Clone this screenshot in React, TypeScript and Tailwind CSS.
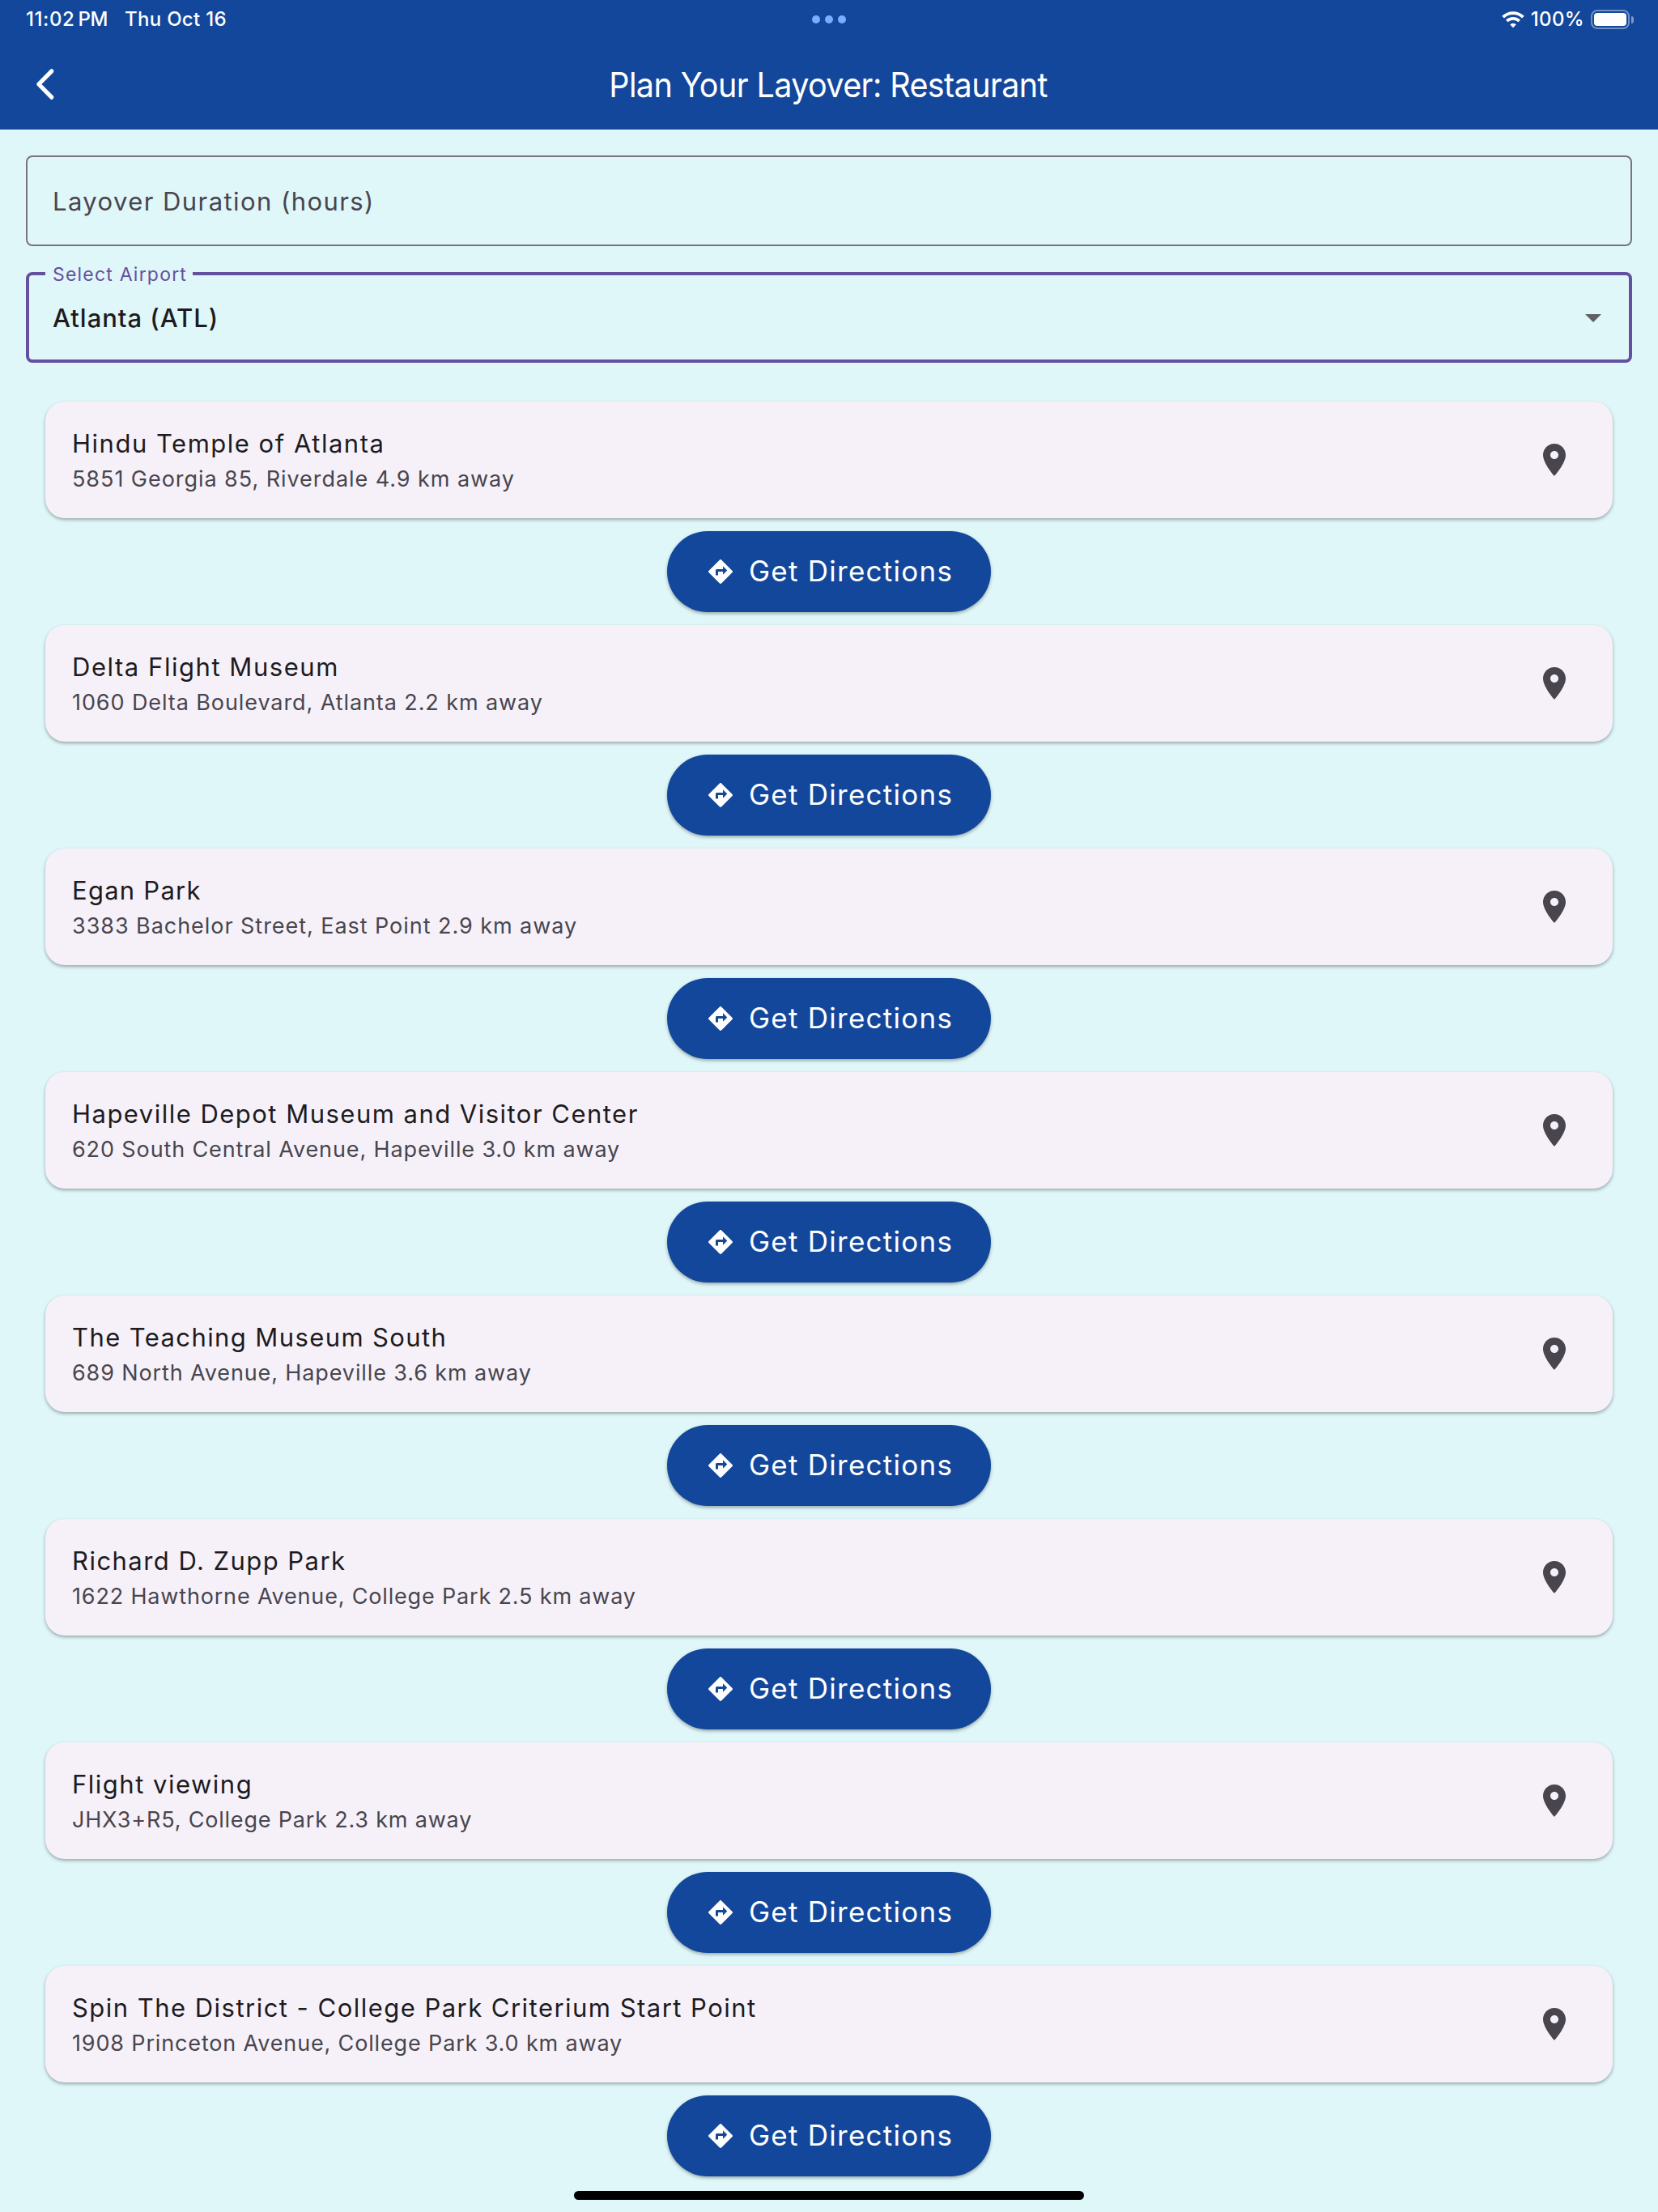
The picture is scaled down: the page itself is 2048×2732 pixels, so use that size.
import React from "react";

type Place = {
  name: string;
  address: string;
  nameTracking: string;
  addressTracking: string;
};

const places: Place[] = [
  { name: "Hindu Temple of Atlanta", address: "5851 Georgia 85, Riverdale 4.9 km away", nameTracking: "tracking-[1.51px]", addressTracking: "tracking-[0.95px]" },
  { name: "Delta Flight Museum", address: "1060 Delta Boulevard, Atlanta 2.2 km away", nameTracking: "tracking-[1.54px]", addressTracking: "tracking-[0.91px]" },
  { name: "Egan Park", address: "3383 Bachelor Street, East Point 2.9 km away", nameTracking: "tracking-[1.25px]", addressTracking: "tracking-[0.95px]" },
  { name: "Hapeville Depot Museum and Visitor Center", address: "620 South Central Avenue, Hapeville 3.0 km away", nameTracking: "tracking-[1.48px]", addressTracking: "tracking-[0.88px]" },
  { name: "The Teaching Museum South", address: "689 North Avenue, Hapeville 3.6 km away", nameTracking: "tracking-[1.4px]", addressTracking: "tracking-[0.88px]" },
  { name: "Richard D. Zupp Park", address: "1622 Hawthorne Avenue, College Park 2.5 km away", nameTracking: "tracking-[1.46px]", addressTracking: "tracking-[0.83px]" },
  { name: "Flight viewing", address: "JHX3+R5, College Park 2.3 km away", nameTracking: "tracking-[1.5px]", addressTracking: "tracking-[0.81px]" },
  { name: "Spin The District - College Park Criterium Start Point", address: "1908 Princeton Avenue, College Park 3.0 km away", nameTracking: "tracking-[1.47px]", addressTracking: "tracking-[0.85px]" },
];

function WifiIcon() {
  return (
    <svg className="h-[21px] w-[28px]" viewBox="0 0 28 21" fill="none" stroke="white">
      <path d="M1.6 7.2a17.8 17.8 0 0 1 24.8 0" strokeWidth="3.9" />
      <path d="M6.3 12a11.1 11.1 0 0 1 15.4 0" strokeWidth="3.7" />
      <path d="M14 20.2l-3.9-3.9a5.6 5.6 0 0 1 7.8 0z" fill="white" stroke="none" />
    </svg>
  );
}

function PinIcon() {
  return (
    <svg className="size-12 shrink-0 fill-[#48454e]" viewBox="0 0 24 24">
      <path d="M12 2C8.13 2 5 5.13 5 9c0 5.25 7 13 7 13s7-7.75 7-13c0-3.87-3.13-7-7-7zm0 9.5c-1.38 0-2.5-1.12-2.5-2.5s1.12-2.5 2.5-2.5 2.5 1.12 2.5 2.5-1.12 2.5-2.5 2.5z" />
    </svg>
  );
}

function DirectionsIcon() {
  return (
    <svg className="size-9 shrink-0 fill-white" viewBox="0 0 24 24">
      <path d="M21.71 11.29l-9-9c-.39-.39-1.02-.39-1.41 0l-9 9c-.39.39-.39 1.02 0 1.41l9 9c.39.39 1.02.39 1.41 0l9-9c.39-.38.39-1.01 0-1.41zM14 14.5V12h-4v3H8v-4c0-.55.45-1 1-1h5V7.5l3.5 3.5-3.5 3.5z" />
    </svg>
  );
}

function StatusBar() {
  return (
    <div className="grid h-12 grid-cols-3 items-center px-[30px] text-2xl font-medium">
      <div className="flex items-center pl-0.5">
        <span className="tracking-[0.6px]">11:02</span>
        <span className="ml-[4px] tracking-[-0.4px]">PM</span>
        <span className="ml-[21px] tracking-[0.3px]">Thu Oct 16</span>
      </div>
      <div className="flex justify-center gap-1.5">
        <span className="size-2.5 rounded-full bg-[#7aadff]" />
        <span className="size-2.5 rounded-full bg-[#7aadff]" />
        <span className="size-2.5 rounded-full bg-[#7aadff]" />
      </div>
      <div className="flex items-center justify-end">
        <WifiIcon />
        <span className="ml-2 tracking-[0.35px]">100%</span>
        <span className="ml-2 h-6 w-12 rounded-[8px] border-2 border-white/40 p-[2px]">
          <span className="block size-full rounded-[4px] bg-white" />
        </span>
        <span className="ml-[2px] h-[9px] w-[3px] rounded-r-full bg-white/45" />
      </div>
    </div>
  );
}

function PlaceItem({ place }: { place: Place }) {
  return (
    <li className="flex flex-col items-center gap-4">
      <div className="flex h-36 w-full items-center justify-between rounded-3xl bg-[#f6f1f9] pr-12 pl-8 shadow-[0_2px_4px_rgba(0,0,0,0.28),0_2px_3px_rgba(0,0,0,0.06)]">
        <div className="h-full pt-[29px] pl-px font-[370] whitespace-nowrap">
          <p className={`text-[31px] leading-[46px] text-[#1d1b20] ${place.nameTracking}`}>{place.name}</p>
          <p className={`text-[27px] leading-[42px] text-[#48454e] ${place.addressTracking}`}>{place.address}</p>
        </div>
        <PinIcon />
      </div>
      <button className="flex h-[100px] w-[400px] items-center gap-[17px] rounded-full bg-[#13479b] pl-12 text-[35px] tracking-[1.25px] whitespace-nowrap text-white shadow-[0_2px_4px_rgba(0,0,0,0.28),0_2px_3px_rgba(0,0,0,0.06)]">
        <DirectionsIcon />
        <span className="pb-0.5">Get Directions</span>
      </button>
    </li>
  );
}

export default function App() {
  return (
    <div className="relative h-[2732px] w-[2048px] overflow-hidden bg-[#dff7f9] font-['Inter',sans-serif]">
      <header className="h-40 bg-[#13479b] text-white">
        <StatusBar />
        <div className="grid h-28 grid-cols-[120px_1fr_120px] items-center">
          <svg className="ml-8 size-12" viewBox="0 0 48 48" fill="none" stroke="white" strokeWidth="5.2" strokeLinecap="round" strokeLinejoin="round">
            <path d="M31.8 7.8L15.8 24l16 16.2" />
          </svg>
          <h1 className="scale-x-[0.93] pt-0.5 pr-0.5 text-center text-[42.5px] font-[370] tracking-[-0.66px] whitespace-nowrap">
            Plan Your Layover: Restaurant
          </h1>
        </div>
      </header>

      <main className="px-8 pt-8">
        <div className="flex h-28 items-center rounded-[8px] border-2 border-[#78747d] pt-0.5 pl-[31px] text-[31px] font-[370] tracking-[1.43px] text-[#48454e]">
          Layover Duration (hours)
        </div>

        <div className="relative mt-8 flex h-28 items-center justify-between rounded-[8px] border-4 border-[#654fa0] pr-5 pl-[29px]">
          <span className="absolute -top-[15px] left-5 bg-[#dff7f9] pr-[7px] pl-[9px] text-[23px] leading-7 font-[370] tracking-[1.2px] text-[#654fa0]">
            Select Airport
          </span>
          <span className="pt-0.5 text-[31px] font-medium tracking-[0.98px] text-[#1d1b20]">Atlanta (ATL)</span>
          <svg className="size-12 fill-[#616161]" viewBox="0 0 24 24">
            <path d="M7 10l5 5 5-5z" />
          </svg>
        </div>

        <ul className="mt-12 flex flex-col gap-4 px-6">
          {places.map((place) => (
            <PlaceItem key={place.name} place={place} />
          ))}
        </ul>
      </main>

      <div className="absolute bottom-[15px] left-1/2 h-[11px] w-[630px] -translate-x-1/2 rounded-full bg-black" />
    </div>
  );
}
